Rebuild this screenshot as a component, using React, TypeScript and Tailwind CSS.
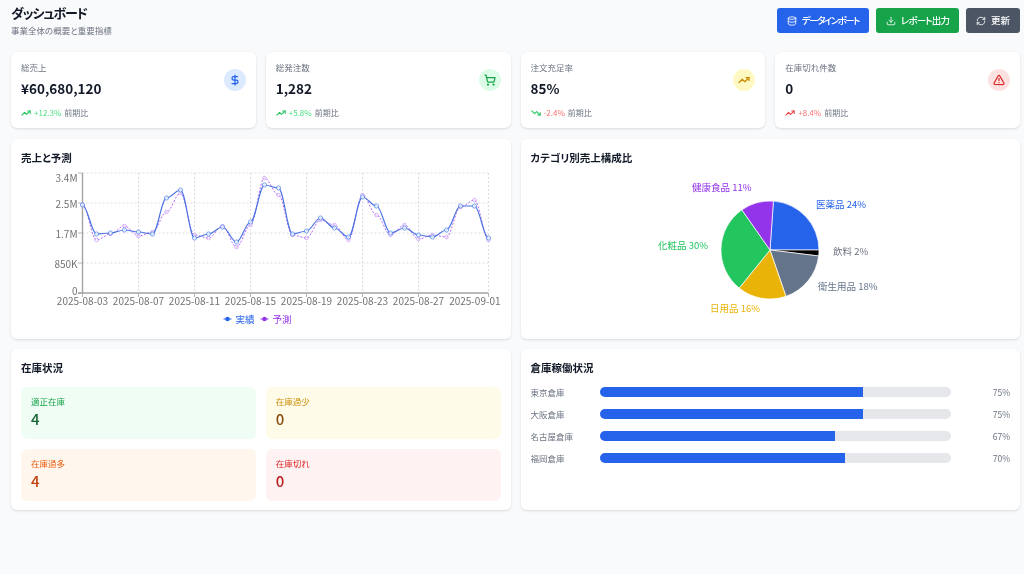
import React from 'react';
import {
  AlertTriangle,
  Database,
  DollarSign,
  Download,
  RefreshCw,
  ShoppingCart,
  TrendingDown,
  TrendingUp,
} from 'lucide-react';

const stats = [
  { label: '総売上', value: '¥60,680,120', delta: '+12.3%', deltaClass: 'text-[#4ade80]', Trend: TrendingUp, trendClass: 'text-[#22c55e]', Icon: DollarSign, circle: 'bg-[#dbeafe]', iconClass: 'text-[#2563eb]' },
  { label: '総発注数', value: '1,282', delta: '+5.8%', deltaClass: 'text-[#4ade80]', Trend: TrendingUp, trendClass: 'text-[#22c55e]', Icon: ShoppingCart, circle: 'bg-[#dcfce7]', iconClass: 'text-[#16a34a]' },
  { label: '注文充足率', value: '85%', delta: '-2.4%', deltaClass: 'text-[#f87171]', Trend: TrendingDown, trendClass: 'text-[#22c55e]', Icon: TrendingUp, circle: 'bg-[#fef9c3]', iconClass: 'text-[#ca8a04]' },
  { label: '在庫切れ件数', value: '0', delta: '+8.4%', deltaClass: 'text-[#f87171]', Trend: TrendingUp, trendClass: 'text-[#ef4444]', Icon: AlertTriangle, circle: 'bg-[#fee2e2]', iconClass: 'text-[#dc2626]' },
];

const stock = [
  { label: '適正在庫', value: 4, bg: 'bg-[#f0fdf4]', labelClass: 'text-[#16a34a]', valueClass: 'text-[#166534]' },
  { label: '在庫過少', value: 0, bg: 'bg-[#fefce8]', labelClass: 'text-[#ca8a04]', valueClass: 'text-[#854d0e]' },
  { label: '在庫過多', value: 4, bg: 'bg-[#fff7ed]', labelClass: 'text-[#ea580c]', valueClass: 'text-[#c2410c]' },
  { label: '在庫切れ', value: 0, bg: 'bg-[#fef2f2]', labelClass: 'text-[#dc2626]', valueClass: 'text-[#b91c1c]' },
];

const warehouses = [
  { name: '東京倉庫', rate: 75 },
  { name: '大阪倉庫', rate: 75 },
  { name: '名古屋倉庫', rate: 67 },
  { name: '福岡倉庫', rate: 70 },
];

// y positions read off the chart, one per day
const actual = [205, 234, 233, 230, 232, 234, 198, 190, 238, 234, 227, 242, 222, 185, 188, 234, 231, 218, 228, 237, 197, 206, 233, 228, 235, 237, 230, 206, 206, 238];
const forecast = [205, 240, 234, 226, 236, 232, 212, 193, 235, 238, 226, 247, 225, 178, 195, 235, 238, 220, 225, 240, 195, 215, 235, 225, 239, 235, 237, 207, 200, 240];

const dayX = (i: number) => 82.5 + i * 14;

// soft curve through the daily points
function toCurve(ys: number[]) {
  return ys
    .map((y, i) => {
      if (i === 0) return `M${dayX(0)} ${y}`;
      const prev = ys[i - 1];
      const k = 14 * 0.35;
      return `C${dayX(i - 1) + k} ${prev} ${dayX(i) - k} ${y} ${dayX(i)} ${y}`;
    })
    .join(' ');
}

const xTicks = [
  { day: 0, label: '2025-08-03', anchor: 'middle', labelX: 82.5 },
  { day: 4, label: '2025-08-07', anchor: 'middle', labelX: 138.5 },
  { day: 8, label: '2025-08-11', anchor: 'middle', labelX: 194.5 },
  { day: 12, label: '2025-08-15', anchor: 'middle', labelX: 250.5 },
  { day: 16, label: '2025-08-19', anchor: 'middle', labelX: 306.5 },
  { day: 20, label: '2025-08-23', anchor: 'middle', labelX: 362.5 },
  { day: 24, label: '2025-08-27', anchor: 'middle', labelX: 418.5 },
  { day: 29, label: '2025-09-01', anchor: 'end', labelX: 500.5 },
];

const yTicks = [
  { y: 173, labelY: 178, label: '3.4M' },
  { y: 203, labelY: 204, label: '2.5M' },
  { y: 233, labelY: 234, label: '1.7M' },
  { y: 263, labelY: 264, label: '850K' },
  { y: 293, labelY: 291, label: '0' },
];

const slices = [
  { from: 4, to: 90, color: '#2563eb' },
  { from: 90, to: 97, color: '#000000' },
  { from: 97, to: 161, color: '#64748b' },
  { from: 161, to: 219, color: '#eab308' },
  { from: 219, to: 325, color: '#22c55e' },
  { from: 325, to: 364, color: '#9333ea' },
];

const pieLabels = [
  { x: 692, y: 187, text: '健康食品 11%', color: '#9333ea' },
  { x: 816, y: 204, text: '医薬品 24%', color: '#2563eb' },
  { x: 833, y: 251, text: '飲料 2%', color: '#6b7280' },
  { x: 818, y: 286, text: '衛生用品 18%', color: '#64748b' },
  { x: 710, y: 308, text: '日用品 16%', color: '#eab308' },
  { x: 658, y: 245, text: '化粧品 30%', color: '#22c55e' },
];

function slicePath(from: number, to: number) {
  const cx = 770;
  const cy = 250;
  const r = 49;
  const point = (deg: number) => {
    const rad = (deg * Math.PI) / 180;
    return `${cx + r * Math.sin(rad)} ${cy - r * Math.cos(rad)}`;
  };
  return `M${cx} ${cy} L${point(from)} A${r} ${r} 0 ${to - from > 180 ? 1 : 0} 1 ${point(to)} Z`;
}

function SalesChart() {
  return (
    <svg viewBox="21 170 480 160" className="block h-[160px] w-[480px]">
      {xTicks.slice(1).map((t) => (
        <line key={t.label} x1={dayX(t.day)} x2={dayX(t.day)} y1={173} y2={293} stroke="#d4d4d8" strokeWidth="0.8" strokeDasharray="2 2" />
      ))}
      {yTicks.slice(0, 4).map((t) => (
        <line key={t.label} x1={82.5} x2={488} y1={t.y} y2={t.y} stroke="#d4d4d8" strokeWidth="0.8" strokeDasharray="2 2" />
      ))}
      <line x1={82.5} x2={82.5} y1={173} y2={293.5} stroke="#a3a3a3" strokeWidth="1.4" />
      <line x1={78} x2={488.5} y1={293} y2={293} stroke="#a3a3a3" strokeWidth="1.4" />
      {xTicks.map((t) => (
        <g key={t.label}>
          <line x1={dayX(t.day)} x2={dayX(t.day)} y1={293} y2={297} stroke="#a3a3a3" strokeWidth="0.8" />
          <text x={t.labelX} y={305} textAnchor={t.anchor as 'middle' | 'end'} fontSize="10" fill="#737373">{t.label}</text>
        </g>
      ))}
      {yTicks.map((t) => (
        <g key={t.label}>
          <line x1={78} x2={82.5} y1={t.y} y2={t.y} stroke="#a3a3a3" strokeWidth="0.8" />
          <text x={77.5} y={t.labelY + 3.5} textAnchor="end" fontSize="10" fill="#737373">{t.label}</text>
        </g>
      ))}

      <path d={toCurve(forecast)} fill="none" stroke="#a855f7" strokeWidth="0.9" strokeDasharray="2 1.6" />
      {forecast.map((y, i) => (
        <circle key={i} cx={dayX(i)} cy={y} r="1.8" fill="#ffffff" fillOpacity="0.4" stroke="#c084fc" strokeWidth="0.6" />
      ))}
      <path d={toCurve(actual)} fill="none" stroke="#4b72e0" strokeWidth="1.2" />
      {actual.map((y, i) => (
        <circle key={i} cx={dayX(i)} cy={y} r="2.1" fill="#ffffff" fillOpacity="0.7" stroke="#5b8def" strokeWidth="0.8" />
      ))}

      <line x1={223.5} x2={231.5} y1={319} y2={319} stroke="#2563eb" strokeWidth="1" />
      <circle cx={227.5} cy={319} r="2.2" fill="#2563eb" />
      <text x={235.5} y={322.5} fontSize="9.5" fill="#2563eb">実績</text>
      <line x1={260.5} x2={268.5} y1={319} y2={319} stroke="#9333ea" strokeWidth="1" />
      <circle cx={264.5} cy={319} r="2.2" fill="#9333ea" />
      <text x={272.5} y={322.5} fontSize="9.5" fill="#9333ea">予測</text>
    </svg>
  );
}

function CategoryPie() {
  return (
    <svg viewBox="531 170 479 160" className="block h-[160px] w-[479px]">
      {slices.map((s) => (
        <path key={s.from} d={slicePath(s.from, s.to)} fill={s.color} stroke="#ffffff" strokeWidth="0.7" />
      ))}
      {pieLabels.map((l) => (
        <text key={l.text} x={l.x} y={l.y + 3.5} fontSize="9.5" fill={l.color}>{l.text}</text>
      ))}
    </svg>
  );
}

export default function App() {
  return (
    <div className="min-h-[574px] overflow-hidden bg-[#f9fafb] pt-2 pr-1 pl-[11px] font-['Noto_Sans_CJK_JP','Noto_Sans',sans-serif] [font-feature-settings:'palt'] blur-[0.35px]">
      {/* Header */}
      <div className="flex h-[25px] items-start justify-between">
        <div>
          <h1 className="text-[13px] leading-[10px] font-bold tracking-[-1.1px] text-[#111827]">ダッシュボード</h1>
          <p className="mt-[6px] text-[8.5px] leading-[12px] text-[#6b7280]">事業全体の概要と重要指標</p>
        </div>
        <div className="flex gap-[7px]">
          <button className="flex h-[25px] w-[92px] items-center justify-center gap-[5px] rounded-[3px] bg-[#2563eb] text-[9.5px] font-medium tracking-[-1.5px] text-white">
            <Database className="h-[10px] w-[10px]" />
            データインポート
          </button>
          <button className="flex h-[25px] w-[83px] items-center justify-center gap-[5px] rounded-[3px] bg-[#16a34a] text-[9.5px] font-medium tracking-[-0.8px] text-white">
            <Download className="h-[10px] w-[10px]" />
            レポート出力
          </button>
          <button className="flex h-[25px] w-[54px] items-center justify-center gap-[5px] rounded-[3px] bg-[#4b5563] text-[9.5px] font-medium text-white">
            <RefreshCw className="h-[10px] w-[10px]" />
            更新
          </button>
        </div>
      </div>

      {/* Stat cards */}
      <div className="mt-[19px] grid grid-cols-4 gap-[10px]">
        {stats.map((s) => (
          <div key={s.label} className="flex h-[76px] flex-col rounded-md bg-white px-[10px] pt-[9px] shadow-sm">
            <div className="flex items-center justify-between">
              <div>
                <p className="text-[8.5px] leading-[12px] text-[#6b7280]">{s.label}</p>
                <p className="mt-[5px] text-[13.5px] leading-[20px] font-semibold text-[#111827]">{s.value}</p>
              </div>
              <div className={`flex h-[22px] w-[22px] items-center justify-center rounded-full ${s.circle}`}>
                <s.Icon strokeWidth={2.5} className={`h-[12px] w-[12px] ${s.iconClass}`} />
              </div>
            </div>
            <div className="mt-[9px] flex items-center gap-[3px] text-[8px] leading-[12px]">
              <s.Trend strokeWidth={2.5} className={`h-[10px] w-[10px] ${s.trendClass}`} />
              <span className={s.deltaClass}>{s.delta}</span>
              <span className="text-[#6b7280]">前期比</span>
            </div>
          </div>
        ))}
      </div>

      {/* Charts */}
      <div className="mt-[11px] grid grid-cols-2 gap-[10px]">
        <div className="h-[200px] rounded-md bg-white p-[10px] pt-[11px] shadow-sm">
          <h2 className="mb-[4px] text-[10.5px] leading-[16px] font-bold text-[#111827]">売上と予測</h2>
          <SalesChart />
        </div>
        <div className="h-[200px] rounded-md bg-white p-[10px] pt-[11px] shadow-sm">
          <h2 className="mb-[4px] text-[10.5px] leading-[16px] font-bold text-[#111827]">カテゴリ別売上構成比</h2>
          <CategoryPie />
        </div>
      </div>

      {/* Stock and warehouse */}
      <div className="mt-[10px] grid grid-cols-2 gap-[10px]">
        <div className="h-[161px] rounded-md bg-white p-[10px] pt-[11px] shadow-sm">
          <h2 className="mb-[11px] text-[10.5px] leading-[16px] font-bold text-[#111827]">在庫状況</h2>
          <div className="grid grid-cols-2 gap-[10px]">
            {stock.map((s) => (
              <div key={s.label} className={`h-[52px] rounded-md px-[10px] pt-[8px] ${s.bg}`}>
                <p className={`text-[8.5px] leading-[12px] ${s.labelClass}`}>{s.label}</p>
                <p className={`mt-[2px] text-[15px] leading-[20px] font-medium ${s.valueClass}`}>{s.value}</p>
              </div>
            ))}
          </div>
        </div>
        <div className="h-[161px] rounded-md bg-white p-[10px] pt-[11px] shadow-sm">
          <h2 className="mb-[11px] text-[10.5px] leading-[16px] font-bold text-[#111827]">倉庫稼働状況</h2>
          <div className="flex flex-col gap-[12px]">
            {warehouses.map((w) => (
              <div key={w.name} className="flex h-[10px] items-center">
                <span className="w-[69px] text-[8.5px] text-[#6b7280]">{w.name}</span>
                <div className="h-[10px] w-[351px] overflow-hidden rounded-full bg-[#e5e7eb]">
                  <div className="h-full bg-[#2563eb]" style={{ width: `${w.rate}%` }} />
                </div>
                <span className="flex-1 text-right text-[8.5px] text-[#6b7280]">{w.rate}%</span>
              </div>
            ))}
          </div>
        </div>
      </div>
    </div>
  );
}
